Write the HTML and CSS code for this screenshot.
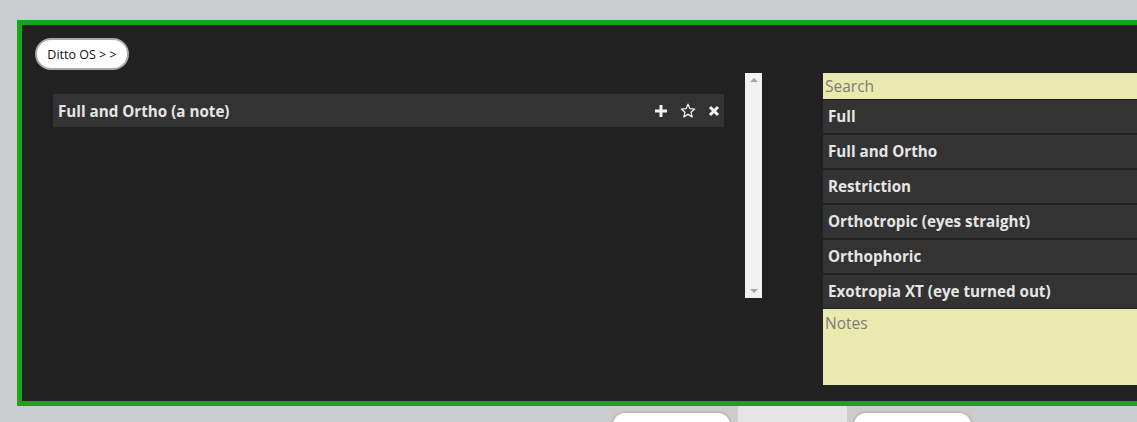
FILE: index.html
```html
<!DOCTYPE html>
<html>
<head>
<meta charset="utf-8">
<link rel="stylesheet" href="styles.css">
</head>
<body>
<div class="panel">
  <div class="top">
    <button class="pill">Ditto OS &gt; &gt;</button>
  </div>
  <div class="content">
    <div class="notes-col">
      <div class="note-head">
        <span class="note-title">Full and Ortho (a note)</span>
        <span class="icons">
          <svg class="ic" width="14" height="14" viewBox="0 0 14 14"><path d="M7 1v12M1 7h12" stroke="#f2f2f2" stroke-width="3" fill="none"/></svg>
          <svg class="ic" width="16" height="16" viewBox="0 0 16 16"><path d="M8 1.2l1.9 4.5 4.8.4-3.7 3.1 1.2 4.7L8 11.4l-4.2 2.5 1.2-4.7L1.3 6.1l4.8-.4z" stroke="#f2f2f2" stroke-width="1.3" fill="none" stroke-linejoin="round"/></svg>
          <svg class="ic" width="12" height="12" viewBox="0 0 12 12"><path d="M2 2l8 8M10 2l-8 8" stroke="#f2f2f2" stroke-width="3" fill="none"/></svg>
        </span>
      </div>
    </div>
    <div class="scrollbar">
      <span class="arrow up"></span>
      <span class="arrow down"></span>
    </div>
    <div class="side">
      <div class="search">Search</div>
      <div class="list">
        <div class="row">Full</div>
        <div class="row">Full and Ortho</div>
        <div class="row">Restriction</div>
        <div class="row">Orthotropic (eyes straight)</div>
        <div class="row">Orthophoric</div>
        <div class="row">Exotropia XT (eye turned out)</div>
      </div>
      <div class="notes">Notes</div>
    </div>
  </div>
</div>
<div class="bottom">
  <div class="btn"></div>
  <div class="tab"></div>
  <div class="btn"></div>
</div>
</body>
</html>
```

FILE: styles.css
```css
html, body {
  margin: 0;
  padding: 0;
  background: #cbcccd;
  overflow: hidden;
  width: 1137px;
  height: 422px;
}
body {
  font-family: "Open Sans", "Noto Sans", sans-serif;
}
.panel {
  margin: 20px 0 0 17px;
  width: 1115px;
  height: 376px;
  box-sizing: content-box;
  border: 5px solid #17a616;
  border-right: 0;
  background: #212121;
  padding: 0;
}
.top {
  padding: 13px 0 0 13px;
  box-sizing: border-box;
  height: 48px;
}
.pill {
  width: 94px;
  height: 32px;
  border: 2px solid #a9a9a9;
  border-radius: 16px;
  background: #fff;
  font-family: "Open Sans", sans-serif;
  font-size: 12.5px;
  color: #111;
  padding: 0;
}
.content {
  display: flex;
  align-items: flex-start;
  padding-left: 31px;
}
.notes-col {
  width: 671px;
  padding-top: 21px;
}
.note-head {
  display: flex;
  align-items: center;
  justify-content: space-between;
  height: 33px;
  background: #333;
  padding-left: 5px;
  padding-right: 4px;
}
.note-title, .row {
  font-weight: 700;
  font-size: 15.2px;
  color: #e6e6e6;
}
.icons {
  display: flex;
  align-items: center;
}
.ic {
  display: block;
}
.icons .ic:nth-child(1) { margin-right: 12px; }
.icons .ic:nth-child(2) { margin-right: 12px; }
.scrollbar {
  margin-left: 21px;
  width: 17px;
  height: 225px;
  background: #f1f1f1;
  display: flex;
  flex-direction: column;
  justify-content: space-between;
  align-items: center;
  padding: 5px 0;
  box-sizing: border-box;
}
.arrow {
  width: 0;
  height: 0;
  border-left: 4px solid transparent;
  border-right: 4px solid transparent;
}
.arrow.up { border-bottom: 4px solid #a3a3a3; }
.arrow.down { border-top: 4px solid #a3a3a3; }
.side {
  margin-left: 61px;
  width: 314px;
  display: flex;
  flex-direction: column;
}
.search {
  height: 26px;
  background: #eaeaae;
  color: #7b7b7b;
  font-size: 15.5px;
  line-height: 26px;
  padding-left: 2px;
  border-bottom: 1px solid #1a1a1a;
}
.list {
  display: flex;
  flex-direction: column;
  gap: 2px;
}
.row {
  height: 33px;
  line-height: 33px;
  background: #333;
  padding-left: 5px;
  white-space: nowrap;
}
.notes {
  margin-top: 1px;
  height: 76px;
  background: #eaeaae;
  color: #7b7b7b;
  font-size: 15.5px;
  padding-left: 2px;
  line-height: 28px;
}
.bottom {
  display: flex;
  align-items: flex-start;
  padding-left: 611px;
  height: 16px;
}
.btn {
  margin-top: 5px;
  width: 121px;
  height: 30px;
  box-sizing: border-box;
  border: 2px solid #bdbdbd;
  border-radius: 14px;
  background: #fff;
}
.tab {
  margin-left: 6px;
  margin-right: 5px;
  width: 109px;
  height: 16px;
  background: #e4e4e4;
}
```
